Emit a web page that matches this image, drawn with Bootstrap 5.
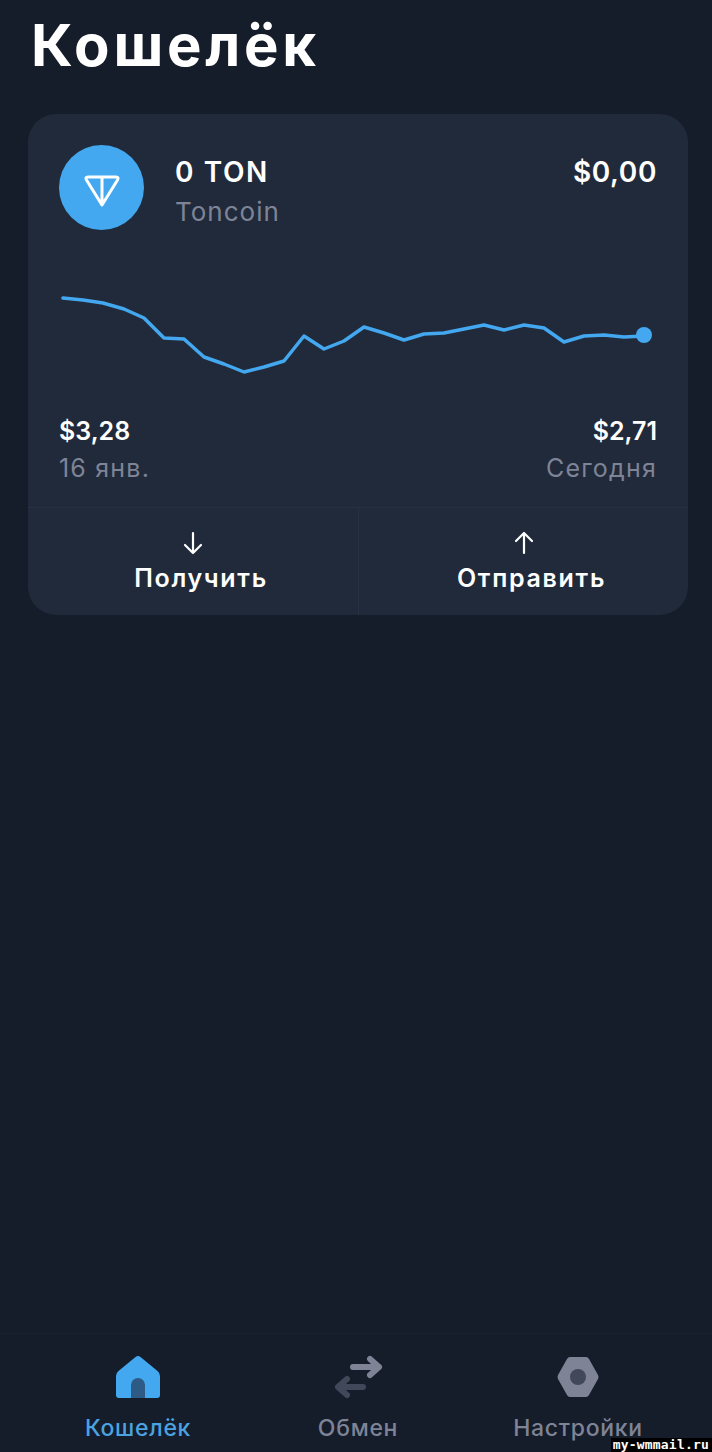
<!doctype html>
<html lang="ru"><head><meta charset="utf-8"><title>Кошелёк</title>
<link href="https://cdn.jsdelivr.net/npm/bootstrap@5.3.0/dist/css/bootstrap.min.css" rel="stylesheet">
<style>
html,body{height:100%}
body{background:#151c2a;color:#fff;font-family:Inter,"Noto Sans",sans-serif;width:712px;height:1452px;overflow:hidden}
.screen{height:1452px}
.page-title{font-size:58px;font-weight:700;line-height:72px;margin:9px 0 33px 31px;letter-spacing:3.700px}
.wallet{background:#212a3a;border-radius:28px;margin:0 24px 0 28px;height:501px}
.coin-row{padding:31px 31px 0 31px}
.coin{width:85px;height:85px;border-radius:50%;background:#43a8f0}
.coin svg{margin-top:6px}
.coin-text{margin-left:31px;padding-top:10px}
.t-main{font-size:28px;font-weight:600;line-height:34px}
.t-ton{letter-spacing:1.600px}
.t-usd{padding-top:10px;letter-spacing:.6px}
.t-sub{font-size:26px;font-weight:400;color:#7e8496;line-height:32px;margin-top:7px;letter-spacing:1px}
.spark{display:block}
.prices{padding:0 31px}
.t-price{font-size:25px;font-weight:600;line-height:32px}
.t-date{font-size:25px;color:#7e8496;line-height:32px;margin-top:5px;letter-spacing:1.200px}
.acts{border-top:1px solid #283043;margin-top:23px}
.act{flex:1 1 50%;padding-top:23px;text-align:center;font-size:25px;font-weight:600;line-height:32px;letter-spacing:1.700px}
.act+.act{border-left:1px solid #283043}
.act svg{display:block;margin:0 auto 7px}
.act-label{display:block;padding-left:16px}
.tabbar{border-top:1px solid #1b2332;height:119px;padding:0 24px 0 28px}
.tab{flex:1 1 0;text-align:center;font-size:23px;font-weight:500;color:#7e8496;padding-top:21px;line-height:20px;letter-spacing:.7px}
.tab.on{color:#4aa3e0}
.tab svg{display:block;margin:0 auto 19px}
.wm{position:absolute;right:0;bottom:0;background:#000;color:#fff;font-family:"DejaVu Sans Mono",monospace;font-weight:700;font-size:13px;line-height:14px;padding:0 3px 0 2px;letter-spacing:.2px}
</style></head>
<body class="position-relative">
<div class="screen d-flex flex-column">
  <h1 class="page-title">Кошелёк</h1>
  <div class="wallet d-flex flex-column">
    <div class="coin-row d-flex align-items-start">
      <div class="coin d-flex align-items-center justify-content-center flex-shrink-0">
        <svg width="36" height="32" viewBox="0 0 36 32" fill="none" stroke="#fff" stroke-width="3" stroke-linejoin="round"><path d="M4 2h28q3 0 1.500 3L18 30 2.500 5Q1 2 4 2zM18 2v28"/></svg>
      </div>
      <div class="coin-text flex-grow-1">
        <div class="t-main t-ton">0 TON</div>
        <div class="t-sub">Toncoin</div>
      </div>
      <div class="t-main t-usd">$0,00</div>
    </div>
    <svg class="spark" width="660" height="185" viewBox="28 230 660 185" fill="none">
      <polyline stroke="#43a8f0" stroke-width="3.500" stroke-linejoin="round" stroke-linecap="round" points="63,298 83,300 103,303 124,309 144,318 164,338 184,339 204,357 224,364 244,372 264,367 284,361 304,336 324,349 344,341 364,327 384,333 404,340 424,334 444,333 464,329 484,325 504,330 524,325 544,328 564,342 584,336 604,335 624,337 644,336"/>
      <circle cx="644" cy="335" r="8" fill="#43a8f0"/>
    </svg>
    <div class="prices d-flex justify-content-between">
      <div><div class="t-price">$3,28</div><div class="t-date">16 янв.</div></div>
      <div class="text-end"><div class="t-price">$2,71</div><div class="t-date">Сегодня</div></div>
    </div>
    <div class="acts d-flex flex-grow-1">
      <div class="act"><svg width="22" height="24" viewBox="0 0 22 24" fill="none" stroke="#fff" stroke-width="2.200" stroke-linecap="round" stroke-linejoin="round"><path d="M11 2v20M3 14l8 8 8-8"/></svg><span class="act-label">Получить</span></div>
      <div class="act"><svg width="22" height="24" viewBox="0 0 22 24" fill="none" stroke="#fff" stroke-width="2.200" stroke-linecap="round" stroke-linejoin="round"><path d="M11 22V2M3 10l8-8 8 8"/></svg><span class="act-label">Отправить</span></div>
    </div>
  </div>
  <div class="tabbar d-flex mt-auto">
    <div class="tab on"><svg width="46" height="44" viewBox="0 0 46 44"><path fill="#43a8f0" d="M20.500 2q2.500-2 5 0l17 14q2.500 2 2.500 5v19q0 3-3 3H4q-3 0-3-3V21q0-3 2.500-5z"/><path fill="#2d5b85" d="M16 43V30a7 7 0 0 1 14 0v13z"/></svg>Кошелёк</div>
    <div class="tab"><svg width="50" height="44" viewBox="0 0 50 44" fill="none" stroke-width="6" stroke-linecap="round" stroke-linejoin="round"><path stroke="#7e8496" d="M20 12h26M37 4l9 8-9 8"/><path stroke="#41485a" d="M30 32H5M14 24l-9 8 9 8"/></svg>Обмен</div>
    <div class="tab"><svg width="44" height="44" viewBox="0 0 44 44"><path fill="#7e8496" d="M11 4q1-2 3-2h16q2 0 3 2l9 16q1 2 0 4l-9 16q-1 2-3 2H14q-2 0-3-2L2 24q-1-2 0-4z"/><circle cx="22" cy="22" r="8" fill="#41485a"/></svg>Настройки</div>
  </div>
</div>
<div class="wm">my-wmmail.ru</div>
</body></html>
